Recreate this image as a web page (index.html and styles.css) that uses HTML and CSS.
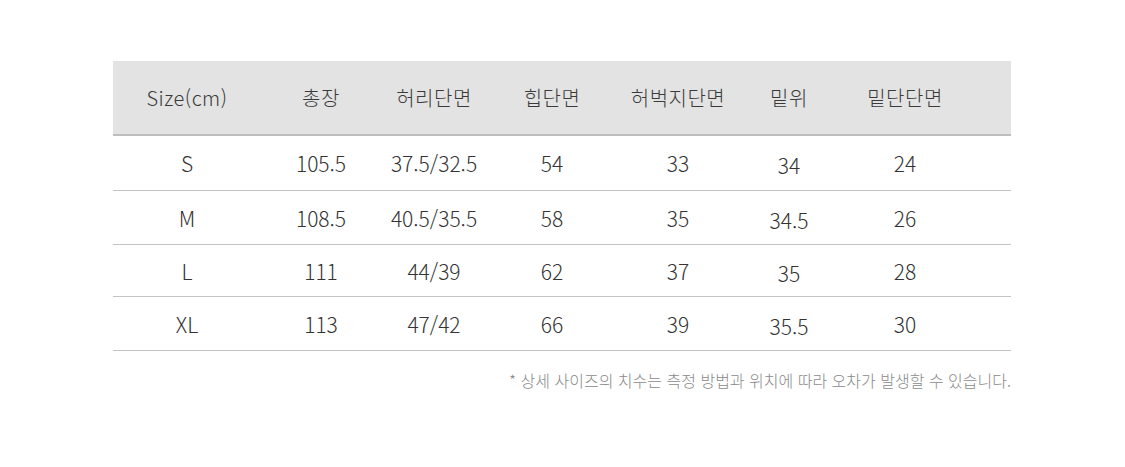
FILE: index.html
```html
<!DOCTYPE html>
<html lang="ko">
<head>
<meta charset="utf-8">
<link rel="stylesheet" href="styles.css">
</head>
<body>
<div class="page">
  <div class="table">
    <div class="row head">
      <div>Size(cm)</div><div>총장</div><div>허리단면</div><div>힙단면</div><div>허벅지단면</div><div>밑위</div><div>밑단단면</div><div></div>
    </div>
    <div class="row r1">
      <div>S</div><div>105.5</div><div>37.5/32.5</div><div>54</div><div>33</div><div class="low">34</div><div>24</div><div></div>
    </div>
    <div class="row r2">
      <div>M</div><div>108.5</div><div>40.5/35.5</div><div>58</div><div>35</div><div class="low">34.5</div><div>26</div><div></div>
    </div>
    <div class="row r3">
      <div>L</div><div>111</div><div>44/39</div><div>62</div><div>37</div><div class="low">35</div><div>28</div><div></div>
    </div>
    <div class="row r4">
      <div>XL</div><div>113</div><div>47/42</div><div>66</div><div>39</div><div class="low">35.5</div><div>30</div><div></div>
    </div>
  </div>
  <p class="note">* 상세 사이즈의 치수는 측정 방법과 위치에 따라 오차가 발생할 수 있습니다.</p>
</div>
</body>
</html>
```

FILE: styles.css
```css
html, body {
  margin: 0;
  padding: 0;
  background: #ffffff;
}
.page {
  padding: 61px 0 0 113px;
  width: 898px;
  font-family: "Noto Sans CJK KR", "Noto Sans", sans-serif;
  font-weight: 300;
  color: #333333;
}
.table {
  width: 898px;
}
.row {
  display: grid;
  grid-template-columns: 148px 120px 106px 130px 122px 100px 132px 40px;
  align-items: center;
  text-align: center;
  font-size: 21px;
  border-bottom: 1px solid #c4c4c4;
}
.row.head {
  background: #e3e3e3;
  height: 73px;
  font-size: 20px;
  letter-spacing: 0.5px;
  border-bottom: 2px solid #bdbdbd;
  color: #3a3a3a;
}
.r1 { height: 54px; }
.r2 { height: 53px; }
.r3 { height: 51px; }
.r4 { height: 53px; }
.low {
  padding-top: 4px;
}
.note {
  margin: 17px 0 0 0;
  text-align: right;
  font-size: 16px;
  color: #8a8a8a;
}
```
